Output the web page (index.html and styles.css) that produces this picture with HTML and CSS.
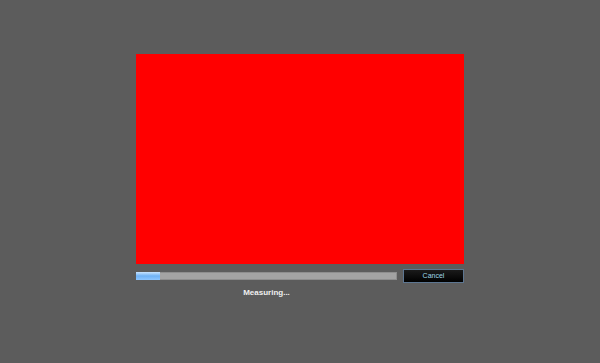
FILE: index.html
```html
<!DOCTYPE html>
<html>
<head>
<meta charset="utf-8">
<link rel="stylesheet" href="styles.css">
</head>
<body>
<div class="stage">
  <div class="panel">
    <div class="canvas"></div>
    <div class="controls">
      <div class="progress-col">
        <div class="progress"><div class="fill"></div></div>
        <div class="status">Measuring...</div>
      </div>
      <button class="cancel">Cancel</button>
    </div>
  </div>
</div>
</body>
</html>
```
FILE: styles.css
```css
html, body {
  margin: 0;
  padding: 0;
  background: #5c5c5c;
  width: 600px;
  height: 363px;
  overflow: hidden;
  font-family: "Liberation Sans", Arial, sans-serif;
}
.stage {
  padding-top: 54px;
  padding-left: 136px;
}
.panel {
  width: 328px;
  display: flex;
  flex-direction: column;
}
.canvas {
  width: 328px;
  height: 210px;
  background: #ff0000;
}
.controls {
  display: flex;
  align-items: flex-start;
  justify-content: space-between;
  margin-top: 5px;
}
.progress-col {
  width: 261px;
  display: flex;
  flex-direction: column;
  padding-top: 3px;
}
.progress {
  width: 261px;
  height: 8px;
  background: #a3a3a3;
  box-shadow: inset 0 0 0 1px #8e8e8e;
}
.fill {
  width: 24px;
  height: 8px;
  background: linear-gradient(#c9e4ff, #6fb2f5 50%, #8ec6ff);
}
.cancel {
  width: 61px;
  height: 14px;
  padding: 0;
  margin: 0;
  border: 1px solid #5d7691;
  background: linear-gradient(#1a1a1a, #000000);
  color: #9fd8e8;
  font-family: "Liberation Sans", Arial, sans-serif;
  font-size: 7px;
  line-height: 12px;
  text-align: center;
}
.status {
  margin-top: 8px;
  text-align: center;
  color: #f0f0f0;
  font-size: 8px;
  font-weight: bold;
  line-height: 10px;
}
```
